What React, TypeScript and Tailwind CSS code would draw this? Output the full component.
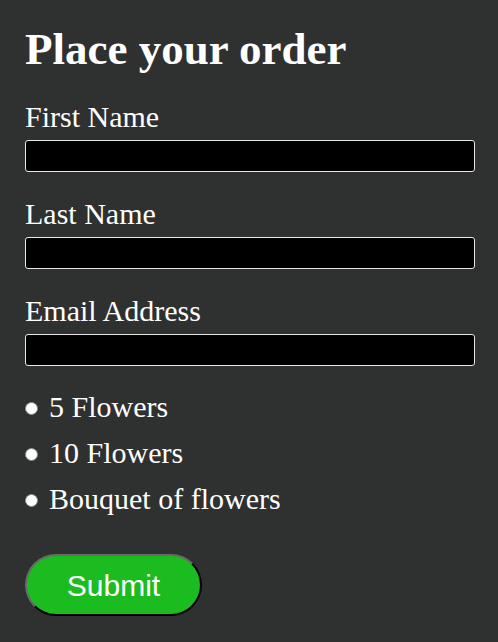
import React from "react";

function Field({ label }: { label: string }) {
  return (
    <div className="flex flex-col">
      <label className="text-[30px] leading-[34px]">{label}</label>
      <div className="mt-[6px] h-[32px] w-[450px] rounded-[3px] border border-[#e8e8e8] bg-black" />
    </div>
  );
}

function Radio({ label }: { label: string }) {
  return (
    <div className="flex h-[46px] items-center gap-[11px]">
      <span className="mt-[2px] h-[13px] w-[13px] rounded-full border border-[#8a8a8a] bg-white" />
      <span className="text-[30px] leading-[34px]">{label}</span>
    </div>
  );
}

export default function App() {
  return (
    <div
      className="min-h-[642px] w-full bg-[#2f3030] px-[25px] pt-[23px] text-white"
      style={{ fontFamily: '"Liberation Serif", "Times New Roman", serif' }}
    >
      <h1 className="text-[45px] font-bold leading-[52px]">Place your order</h1>
      <div className="mt-[25px] flex flex-col gap-[25px]">
        <Field label="First Name" />
        <Field label="Last Name" />
        <Field label="Email Address" />
      </div>
      <div className="mt-[18px] flex flex-col">
        <Radio label="5 Flowers" />
        <Radio label="10 Flowers" />
        <Radio label="Bouquet of flowers" />
      </div>
      <button
        className="mt-[32px] h-[62px] w-[177px] rounded-[31px] border-2 border-t-[#6a6a6a] border-l-[#6a6a6a] border-b-black border-r-black bg-[#1bbc1f] text-[30px] text-white"
        style={{ fontFamily: '"Liberation Sans", Arial, sans-serif' }}
      >
        Submit
      </button>
    </div>
  );
}
